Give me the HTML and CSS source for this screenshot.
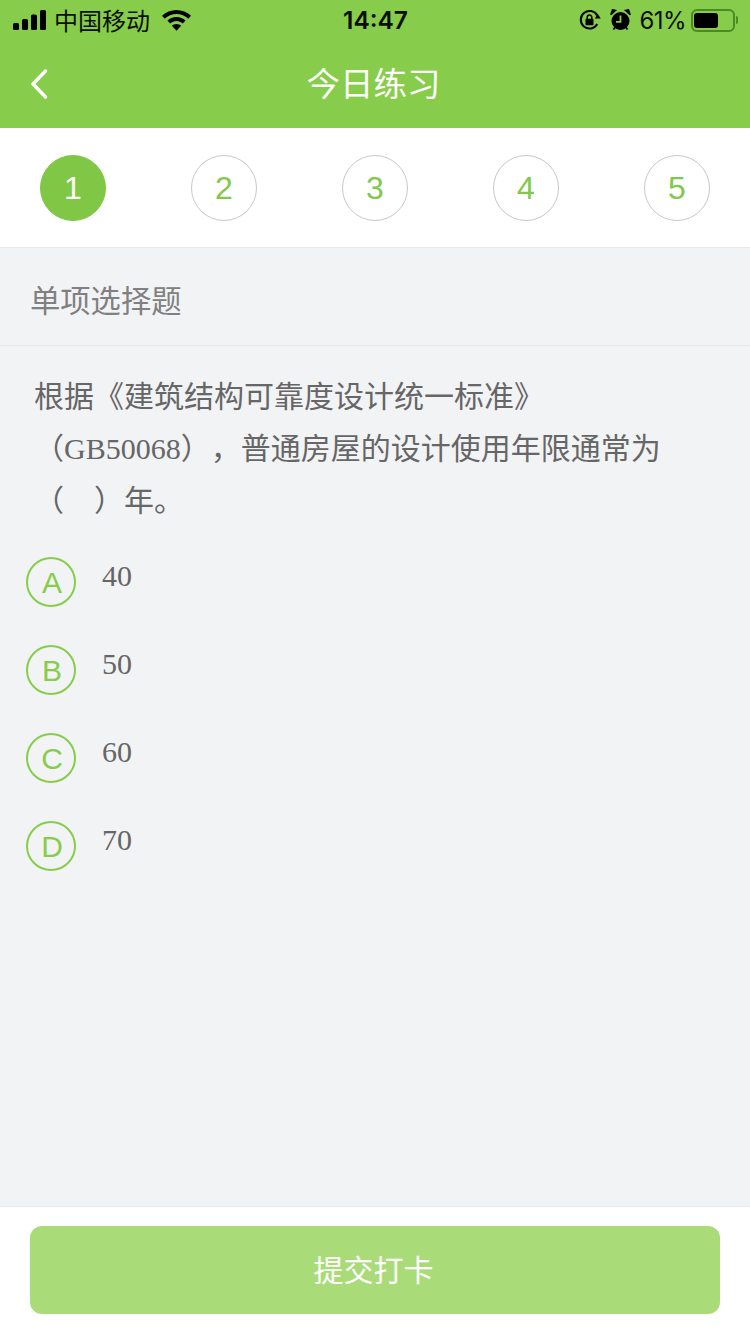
FILE: index.html
```html
<!DOCTYPE html>
<html lang="zh-CN">
<head>
<meta charset="utf-8">
<title>今日练习</title>
<link rel="stylesheet" href="styles.css">
</head>
<body>
<div class="page">
  <header class="header">
    <div class="status">
      <div class="status-left">
        <svg class="signal" width="34" height="20" viewBox="0 0 34 20"><rect x="0" y="13" width="6" height="7" rx="1.5"/><rect x="9" y="9" width="6" height="11" rx="1.5"/><rect x="18" y="4.500" width="6" height="15.500" rx="1.500"/><rect x="27" y="0" width="6" height="20" rx="1.500"/></svg>
        <span class="carrier">中国移动</span>
        <svg class="wifi" width="29" height="21" viewBox="0 0 29 21"><path d="M14.500 0C9 0 4 2.100 0 5.800l2.700 2.900C5.800 5.800 10 4.100 14.500 4.100s8.700 1.700 11.800 4.600L29 5.800C25 2.100 20 0 14.500 0z"/><path d="M14.500 7C11 7 7.900 8.300 5.400 10.600l2.800 2.900c1.700-1.500 3.900-2.400 6.300-2.400s4.600.9 6.300 2.400l2.800-2.900C21.100 8.300 18 7 14.500 7z"/><path d="M14.500 14c-1.900 0-3.500.7-4.700 1.800l4.700 5 4.700-5C18 14.700 16.400 14 14.500 14z"/></svg>
      </div>
      <div class="time">14:47</div>
      <div class="status-right">
        <svg class="rotlock" width="22" height="22" viewBox="0 0 22 22"><path d="M18.300 15A8.800 8.800 0 1 1 18.300 6.500" fill="none" stroke="#000" stroke-width="2"/><path d="M15.800 9.500h6l-3-4.500z"/><rect x="6.500" y="9.800" width="8" height="6.500" rx="1"/><path d="M8.200 10V8.300a2.300 2.300 0 0 1 4.600 0V10" fill="none" stroke="#000" stroke-width="1.500"/></svg>
        <svg class="alarm" width="21" height="22" viewBox="0 0 21 22"><circle cx="10.500" cy="12" r="9"/><path d="M.8 5.800 5.500 1.500 2.500.8zM20.200 5.800 15.500 1.500 18.500.8z" stroke="#000" stroke-width="1.500"/><path d="M3.500 20.500l1.500-2M17.500 20.500 16 18.500" stroke="#000" stroke-width="1.800"/><path d="M10.500 6.500v6.300H6" fill="none" stroke="#87cd4b" stroke-width="1.800"/></svg>
        <span class="percent">61%</span>
        <div class="battery"><div class="battery-fill"></div></div>
        <div class="battery-nub"></div>
      </div>
    </div>
    <nav class="nav">
      <svg class="back" width="18" height="30" viewBox="0 0 18 30"><path d="M15.500 2 3 15l12.500 13" fill="none" stroke="#fff" stroke-width="3.400" stroke-linecap="round" stroke-linejoin="round"/></svg>
      <h1 class="nav-title">今日练习</h1>
    </nav>
  </header>

  <ol class="steps">
    <li class="step step-active">1</li>
    <li class="step">2</li>
    <li class="step">3</li>
    <li class="step">4</li>
    <li class="step">5</li>
  </ol>

  <main class="main">
    <h2 class="type">单项选择题</h2>
    <p class="question">根据《建筑结构可靠度设计统一标准》（GB50068），普通房屋的设计使用年限通常为（　）年。</p>
    <ul class="options">
      <li class="option"><span class="letter">A</span><span class="value">40</span></li>
      <li class="option"><span class="letter">B</span><span class="value">50</span></li>
      <li class="option"><span class="letter">C</span><span class="value">60</span></li>
      <li class="option"><span class="letter">D</span><span class="value">70</span></li>
    </ul>
  </main>

  <footer class="footer">
    <button class="submit" type="button">提交打卡</button>
  </footer>
</div>
</body>
</html>
```
FILE: styles.css
```css
* { box-sizing: border-box; }
html, body { margin: 0; padding: 0; }
body {
  font-family: "Liberation Serif", "Noto Sans CJK SC", serif;
  background: #f2f3f5;
}
.page {
  width: 750px;
  height: 1334px;
  display: flex;
  flex-direction: column;
  overflow: hidden;
}

/* Header */
.header { background: #87cc4a; height: 128px; }
.status {
  height: 40px;
  display: grid;
  grid-template-columns: 1fr auto 1fr;
  align-items: center;
  padding: 0 12px 0 13px;
  font-family: Inter, "Noto Sans CJK SC", sans-serif;
  color: #0a0f05;
  font-size: 24px;
}
.status svg { display: block; fill: #000; }
.status-left { display: flex; align-items: center; }
.carrier { margin-left: 7px; font-family: "Noto Sans CJK SC", sans-serif; line-height: 40px; }
.wifi { margin-left: 12px; }
.time { font-weight: 600; font-size: 24.500px; }
.status-right { display: flex; align-items: center; justify-content: flex-end; }
.alarm { margin-left: 9px; }
.percent { margin-left: 9px; font-size: 24px; letter-spacing: -0.600px; }
.battery {
  width: 44px;
  height: 23px;
  margin-left: 5px;
  border: 2px solid #4c8a26;
  border-radius: 6px;
  padding: 2px 1px;
}
.battery-fill { width: 24px; height: 100%; background: #000; border-radius: 3px; }
.battery-nub { width: 2px; height: 8px; margin-left: 1px; background: #4c8a26; border-radius: 0 2px 2px 0; }

.nav {
  height: 88px;
  display: flex;
  align-items: center;
  justify-content: center;
  position: relative;
}
.back { position: absolute; left: 30px; top: 29px; }
.nav-title {
  margin: 0 3px 6px 0;
  font-family: "Noto Sans CJK SC", sans-serif;
  font-size: 33.500px;
  font-weight: 400;
  color: #fff;
}

/* Steps */
.steps {
  list-style: none;
  margin: 0;
  height: 120px;
  padding: 27px 40px 0;
  display: flex;
  justify-content: space-between;
  align-items: flex-start;
  background: #fff;
  border-bottom: 1px solid #e8e8e8;
}
.step {
  width: 66px;
  height: 66px;
  border-radius: 50%;
  border: 1px solid #c8c8c8;
  display: flex;
  align-items: center;
  justify-content: center;
  font-family: "Liberation Sans", sans-serif;
  font-size: 32px;
  color: #82c84a;
}
.step-active { background: #7fc745; border-color: #7fc745; color: #fff; }

/* Main */
.main { flex: 1; }
.type {
  margin: 0;
  height: 98px;
  padding: 4px 0 0 30px;
  display: flex;
  align-items: center;
  font-family: "Noto Sans CJK SC", sans-serif;
  font-size: 30.300px;
  font-weight: 400;
  color: #808080;
  border-bottom: 1px solid #e6e7e9;
}
.question {
  margin: 0;
  padding: 25px 35px 0 34px;
  font-size: 30px;
  line-height: 52px;
  color: #666;
  text-spacing-trim: space-all;
}
.options { list-style: none; margin: 0; padding: 30px 0 0 26px; }
.option { display: flex; align-items: flex-start; height: 88px; }
.letter {
  width: 50px;
  height: 50px;
  padding: 2px 0 0 2px;
  border-radius: 50%;
  border: 2px solid #87cd4b;
  display: flex;
  align-items: center;
  justify-content: center;
  font-family: "Liberation Sans", sans-serif;
  font-size: 30px;
  color: #87cd4b;
}
.value {
  margin-left: 26px;
  font-size: 30px;
  line-height: 38px;
  color: #666;
}

/* Footer */
.footer {
  height: 128px;
  padding: 19px 30px 0;
  background: #fff;
  border-top: 1px solid #e8e9eb;
}
.submit {
  display: block;
  width: 100%;
  height: 88px;
  padding: 0 3px 4px 0;
  border: 0;
  border-radius: 12px;
  background: #a9dc78;
  color: #fff;
  font-family: "Noto Sans CJK SC", sans-serif;
  font-size: 30px;
}
```
